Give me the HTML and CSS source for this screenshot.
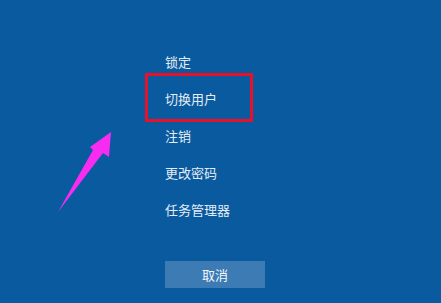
FILE: index.html
```html
<!DOCTYPE html>
<html lang="zh-CN">
<head>
<meta charset="utf-8">
<link rel="stylesheet" href="styles.css">
</head>
<body>
<div class="screen">
  <ul class="menu">
    <li>锁定</li>
    <li>切换用户</li>
    <li>注销</li>
    <li>更改密码</li>
    <li>任务管理器</li>
  </ul>
  <button class="cancel">取消</button>
  <div class="highlight"></div>
  <svg class="arrow" width="441" height="303" viewBox="0 0 441 303">
    <polygon points="111,132 109,157 103,153 58,212 93,150 90,147" fill="#f72cf0"/>
  </svg>
</div>
</body>
</html>
```
FILE: styles.css
```css
html, body {
  margin: 0;
  padding: 0;
}
body {
  background: #0a5aa0;
  width: 441px;
  height: 303px;
  overflow: hidden;
  font-family: "Noto Sans CJK SC", "Noto Sans", sans-serif;
}
.screen {
  position: relative;
  width: 441px;
  height: 303px;
  display: flex;
  flex-direction: column;
  align-items: flex-start;
  padding-left: 165px;
  padding-top: 43px;
  box-sizing: border-box;
}
.menu {
  list-style: none;
  margin: 0;
  padding: 0;
}
.menu li {
  color: #e4ecf4;
  font-size: 13px;
  line-height: 37px;
  height: 37px;
}
.cancel {
  margin-top: 33px;
  width: 100px;
  height: 27px;
  border: none;
  background: #3d7bb5;
  color: #f2f6fa;
  font-family: "Noto Sans CJK SC", "Noto Sans", sans-serif;
  font-size: 13px;
  padding: 0;
}
.highlight {
  position: absolute;
  left: 145px;
  top: 73px;
  width: 108px;
  height: 49px;
  border: 3px solid #e8112a;
  box-sizing: border-box;
}
.arrow {
  position: absolute;
  left: 0;
  top: 0;
}
```
